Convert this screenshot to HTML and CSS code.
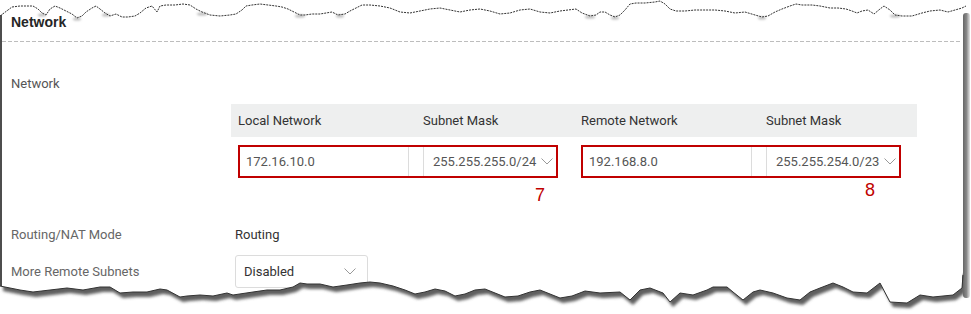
FILE: index.html
```html
<!DOCTYPE html>
<html lang="en">
<head>
    <meta charset="UTF-8">
    <meta name="viewport" content="width=device-width, initial-scale=1.0">
    <title>Network</title>
    <link rel="stylesheet" href="styles.css">
</head>
<body>
    <div class="page">
        <div class="panel">
            <h2 class="panel-title">Network</h2>
            <div class="panel-body">
                <div class="field-label">Network</div>
                <div class="net-table">
                    <div class="net-head">
                        <span>Local Network</span>
                        <span>Subnet Mask</span>
                        <span>Remote Network</span>
                        <span>Subnet Mask</span>
                    </div>
                    <div class="net-row">
                        <div class="net-group">
                            <div class="marked">
                                <div class="text-input">172.16.10.0</div>
                                <div class="select-input">
                                    <span>255.255.255.0/24</span>
                                    <svg class="chevron" width="12" height="7" viewBox="0 0 12 7"><path d="M0.5 0.5 L6 6 L11.5 0.5"/></svg>
                                </div>
                            </div>
                            <div class="callout callout-7">7</div>
                        </div>
                        <div class="net-group">
                            <div class="marked">
                                <div class="text-input">192.168.8.0</div>
                                <div class="select-input">
                                    <span>255.255.254.0/23</span>
                                    <svg class="chevron" width="12" height="7" viewBox="0 0 12 7"><path d="M0.5 0.5 L6 6 L11.5 0.5"/></svg>
                                </div>
                            </div>
                            <div class="callout callout-8">8</div>
                        </div>
                    </div>
                </div>
                <div class="form-row">
                    <span class="form-label">Routing/NAT Mode</span>
                    <span class="form-value">Routing</span>
                </div>
                <div class="form-row">
                    <span class="form-label">More Remote Subnets</span>
                    <div class="dropdown">
                        <span>Disabled</span>
                        <svg class="chevron" width="12" height="7" viewBox="0 0 12 7"><path d="M0.5 0.5 L6 6 L11.5 0.5"/></svg>
                    </div>
                </div>
            </div>
        </div>

        <!-- torn paper edges drawn over the screenshot -->
        <svg class="tear" width="971" height="314" viewBox="0 0 971 314">
            <defs>
                <filter id="blur" x="-5%" y="-50%" width="110%" height="200%">
                    <feGaussianBlur stdDeviation="1.6"/>
                </filter>
                <filter id="soft" x="-5%" y="-50%" width="110%" height="200%">
                    <feGaussianBlur stdDeviation="1.2"/>
                </filter>
                <clipPath id="below">
                    <path id="below-shape" d="M0 286 L10 288 L20 290 L33 292 L50 290 L67 288 L83 290 L100 287 L110 287 L120 293 L133 292 L147 292 L160 289 L167 290 L180 297 L187 296 L200 295 L213 296 L227 293 L233 295 L253 292 L267 290 L280 290 L293 287 L300 283 L307 284 L320 284 L333 287 L347 285 L360 283 L370 282 L380 283 L393 286 L405 290 L415 294 L425 292 L435 289 L445 291 L455 296 L465 294 L475 290 L485 289 L495 293 L505 297 L518 296 L530 292 L540 290 L550 294 L560 298 L572 296 L585 291 L600 293 L620 292 L630 300 L640 290 L650 288 L663 293 L670 302 L680 293 L693 295 L707 290 L713 287 L727 287 L733 292 L743 300 L753 292 L760 290 L773 293 L787 298 L800 300 L810 292 L820 288 L833 283 L843 287 L853 292 L867 293 L880 283 L890 302 L907 303 L920 295 L933 297 L953 295 L962 288 L963 12 L971 12 L971 314 L0 314 Z"/>
                </clipPath>
                <linearGradient id="side" x1="0" x2="1" y1="0" y2="0">
                    <stop offset="0" stop-color="#666"/>
                    <stop offset="0.5" stop-color="#888"/>
                    <stop offset="1" stop-color="#e6e6e6"/>
                </linearGradient>
            </defs>

            <path class="tear-fill" d="M0 0 L971 0 L971 12 L966 6 L962 8 L955 10 L948 12 L940 10 L930 11 L922 13 L912 16 L902 16 L895 15 L890 10 L884 6 L880 9 L874 14 L868 10 L862 11 L857 13 L852 11 L846 9 L838 8 L830 8 L820 6 L812 5 L802 5 L796 4 L790 6 L782 9 L775 12 L768 16 L762 17 L755 15 L745 12 L735 13 L725 11 L715 10 L695 10 L685 11 L676 11 L670 9 L665 4 L660 1 L655 2 L645 3 L636 3 L630 4 L625 10 L620 15 L615 17 L610 15 L605 12 L600 12 L596 15 L590 16 L582 13 L576 9 L568 10 L560 11 L550 13 L540 12 L530 9 L520 10 L510 13 L500 14 L490 11 L480 9 L470 10 L460 12 L450 10 L440 8 L430 9 L420 11 L410 13 L400 12 L390 8 L380 6 L370 5 L362 5 L356 8 L350 11 L345 14 L338 15 L332 12 L326 13 L320 14 L312 14 L305 15 L300 15 L294 12 L288 9 L282 7 L276 6 L268 5 L260 4 L252 5 L246 6 L242 10 L236 14 L230 15 L220 16 L210 15 L202 12 L196 9 L190 5 L183 4 L175 5 L166 5 L160 6 L157 12 L152 6 L146 8 L140 13 L135 16 L128 17 L122 17 L116 14 L110 16 L105 13 L100 9 L96 6 L92 8 L86 12 L82 16 L77 18 L72 14 L66 11 L60 8 L55 6 L50 9 L46 15 L42 13 L38 9 L33 6 L20 6 L12 7 L8 10 L4 13 L0 16 Z"/>
            <g class="top-smudges" filter="url(#soft)">
                <ellipse cx="42" cy="15" rx="4" ry="1.5"/>
                <ellipse cx="77" cy="19" rx="4" ry="1.5"/>
                <ellipse cx="106" cy="15" rx="4" ry="1.5"/>
                <ellipse cx="202" cy="14" rx="5" ry="1.5"/>
                <ellipse cx="300" cy="16" rx="5" ry="1.5"/>
                <ellipse cx="340" cy="16" rx="4" ry="1.5"/>
                <ellipse cx="590" cy="17" rx="5" ry="1.5"/>
                <ellipse cx="615" cy="18" rx="4" ry="1.5"/>
                <ellipse cx="762" cy="18" rx="4" ry="1.5"/>
                <ellipse cx="895" cy="16" rx="5" ry="1.5"/>
            </g>
            <path class="tear-line dotted" d="M0 16 L4 13 L8 10 L12 7 L20 6 L33 6 L38 9 L42 13 L46 15 L50 9 L55 6 L60 8 L66 11 L72 14 L77 18 L82 16 L86 12 L92 8 L96 6 L100 9 L105 13 L110 16 L116 14 L122 17 L128 17 L135 16 L140 13 L146 8 L152 6 L157 12 L160 6 L166 5 L175 5 L183 4 L190 5 L196 9 L202 12 L210 15 L220 16 L230 15 L236 14 L242 10 L246 6 L252 5 L260 4 L268 5 L276 6 L282 7 L288 9 L294 12 L300 15 L305 15 L312 14 L320 14 L326 13 L332 12 L338 15 L345 14 L350 11 L356 8 L362 5 L370 5 L380 6 L390 8 L400 12 L410 13 L420 11 L430 9 L440 8 L450 10 L460 12 L470 10 L480 9 L490 11 L500 14 L510 13 L520 10 L530 9 L540 12 L550 13 L560 11 L568 10 L576 9 L582 13 L590 16 L596 15 L600 12 L605 12 L610 15 L615 17 L620 15 L625 10 L630 4 L636 3 L645 3 L655 2 L660 1 L665 4 L670 9 L676 11 L685 11 L695 10 L715 10 L725 11 L735 13 L745 12 L755 15 L762 17 L768 16 L775 12 L782 9 L790 6 L796 4 L802 5 L812 5 L820 6 L830 8 L838 8 L846 9 L852 11 L857 13 L862 11 L868 10 L874 14 L880 9 L884 6 L890 10 L895 15 L902 16 L912 16 L922 13 L930 11 L940 10 L948 12 L955 10 L962 8 L966 6"/>

            <use class="tear-fill" href="#below-shape"/>
            <g clip-path="url(#below)">
                <path class="tear-shadow" filter="url(#blur)" transform="translate(3 5)" d="M0 286 L10 288 L20 290 L33 292 L50 290 L67 288 L83 290 L100 287 L110 287 L120 293 L133 292 L147 292 L160 289 L167 290 L180 297 L187 296 L200 295 L213 296 L227 293 L233 295 L253 292 L267 290 L280 290 L293 287 L300 283 L307 284 L320 284 L333 287 L347 285 L360 283 L370 282 L380 283 L393 286 L405 290 L415 294 L425 292 L435 289 L445 291 L455 296 L465 294 L475 290 L485 289 L495 293 L505 297 L518 296 L530 292 L540 290 L550 294 L560 298 L572 296 L585 291 L600 293 L620 292 L630 300 L640 290 L650 288 L663 293 L670 302 L680 293 L693 295 L707 290 L713 287 L727 287 L733 292 L743 300 L753 292 L760 290 L773 293 L787 298 L800 300 L810 292 L820 288 L833 283 L843 287 L853 292 L867 293 L880 283 L890 302 L907 303 L920 295 L933 297 L953 295 L962 288 L962 270 L0 270 Z"/>
            </g>
            <rect x="963" y="13" width="7" height="285" rx="3" fill="url(#side)"/>
            <path class="tear-line" d="M0 286 L10 288 L20 290 L33 292 L50 290 L67 288 L83 290 L100 287 L110 287 L120 293 L133 292 L147 292 L160 289 L167 290 L180 297 L187 296 L200 295 L213 296 L227 293 L233 295 L253 292 L267 290 L280 290 L293 287 L300 283 L307 284 L320 284 L333 287 L347 285 L360 283 L370 282 L380 283 L393 286 L405 290 L415 294 L425 292 L435 289 L445 291 L455 296 L465 294 L475 290 L485 289 L495 293 L505 297 L518 296 L530 292 L540 290 L550 294 L560 298 L572 296 L585 291 L600 293 L620 292 L630 300 L640 290 L650 288 L663 293 L670 302 L680 293 L693 295 L707 290 L713 287 L727 287 L733 292 L743 300 L753 292 L760 290 L773 293 L787 298 L800 300 L810 292 L820 288 L833 283 L843 287 L853 292 L867 293 L880 283 L890 302 L907 303 L920 295 L933 297 L953 295 L962 288 L963 275"/>
        </svg>
    </div>
</body>
</html>
```

FILE: styles.css
```css
body {
    margin: 0;
    background-color: #fff;
    font-family: Roboto, "Liberation Sans", sans-serif;
    font-size: 13px;
    color: #333;
}
.page {
    position: relative;
    width: 971px;
    height: 314px;
    overflow: hidden;
    background-color: #fff;
}
.panel {
    width: 961px;
    height: 314px;
    border-left: 2px solid #4d4d4d;
    box-sizing: border-box;
}
.panel-title {
    margin: 0;
    padding: 14px 9px 12px;
    height: 16px;
    line-height: 16px;
    font-family: "Liberation Sans", Arial, sans-serif;
    font-size: 14px;
    font-weight: bold;
    color: #262626;
    background-image: repeating-linear-gradient(to right, #bdbdbd 0 4px, transparent 4px 6px);
    background-size: 100% 1px;
    background-repeat: no-repeat;
    background-position: bottom left;
}
.panel-body {
    padding: 34px 0 0 9px;
}
.field-label {
    line-height: 16px;
    color: #555;
}
.net-table {
    margin: 12px 0 0 220px;
    width: 686px;
}
.net-head {
    display: grid;
    grid-template-columns: 185px 158px 185px 158px;
    height: 33px;
    align-items: center;
    background-color: #eeefef;
    color: #333;
}
.net-head span {
    padding-left: 7px;
}
.net-row {
    display: flex;
    margin-top: 8px;
}
.net-group {
    width: 343px;
    padding: 0 16px 0 7px;
    box-sizing: border-box;
}
.marked {
    display: flex;
    height: 33px;
    border: 2px solid #c00000;
    box-sizing: border-box;
}
.text-input {
    width: 169px;
    border-right: 1px solid #dcdcdc;
    box-sizing: border-box;
    padding-left: 6px;
    line-height: 29px;
    color: #555;
}
.select-input {
    display: flex;
    align-items: center;
    justify-content: space-between;
    flex: 1;
    margin-left: 14px;
    border-left: 1px solid #dcdcdc;
    padding: 0 3px 0 9px;
    color: #555;
}
.chevron {
    fill: none;
    stroke: #999;
    stroke-width: 1;
}
.callout {
    height: 30px;
    line-height: 28px;
    padding-top: 3px;
    font-family: "Liberation Sans", Arial, sans-serif;
    font-size: 18px;
    color: #c00000;
}
.callout-7 {
    padding-left: 297px;
}
.callout-8 {
    padding-left: 284px;
    margin-top: -5px;
}
.form-row {
    display: flex;
    align-items: center;
    height: 33px;
    margin-top: 4px;
}
.net-table + .form-row {
    margin-top: 7px;
}
.form-label {
    width: 224px;
    color: #666;
}
.form-value {
    color: #333;
}
.dropdown {
    display: flex;
    align-items: center;
    justify-content: space-between;
    width: 133px;
    height: 33px;
    box-sizing: border-box;
    border: 1px solid #dcdcdc;
    border-radius: 3px;
    padding: 0 11px 0 8px;
    color: #333;
}
.tear {
    position: absolute;
    top: 0;
    left: 0;
    pointer-events: none;
}
.tear-fill {
    fill: #fff;
}
.tear-line {
    fill: none;
    stroke: #333;
    stroke-width: 1;
}
.tear-line.dotted {
    stroke-dasharray: 2 1;
}
.tear-shadow {
    fill: #5e5e5e;
}
.top-smudges {
    fill: #bbb;
}
```
